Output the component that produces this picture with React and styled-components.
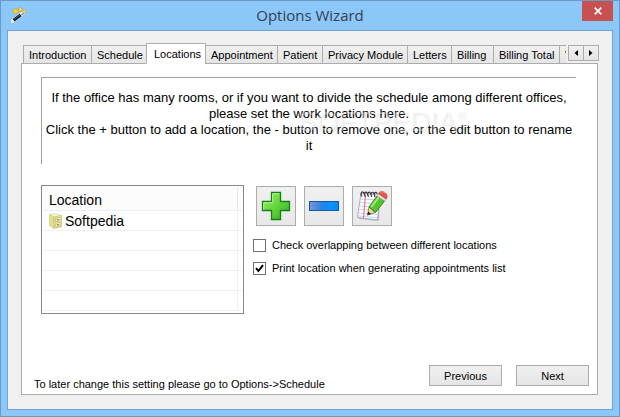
import React, { useState } from 'react'
import styled, { createGlobalStyle } from 'styled-components'

const GlobalStyle = createGlobalStyle`
    * {
        box-sizing: border-box;
    }
    body {
        margin: 0;
        font-family: 'Liberation Sans', Arial, sans-serif;
        font-size: 11px;
        color: #000;
    }
    button {
        font: inherit;
        color: inherit;
    }
`

const Window = styled.div`
    display: flex;
    flex-direction: column;
    min-height: 100vh;
    padding: 0 6px 6px;
    border: 1px solid #6b98c4;
    background: #8cc7fa;
`

const TitleBar = styled.header`
    display: grid;
    grid-template-columns: 45px 1fr 45px;
    align-items: start;
    height: 29px;
`

const AppIcon = styled.svg`
    width: 16px;
    height: 16px;
    margin: 6px 0 0 4px;
`

const Title = styled.h1`
    margin: 0;
    text-align: center;
    font-family: 'Open Sans', 'Segoe UI', sans-serif;
    font-size: 15px;
    line-height: 29px;
    font-weight: 400;
    color: #33414e;
`

const CloseBtn = styled.button`
    display: flex;
    align-items: center;
    justify-content: center;
    justify-self: end;
    width: 31px;
    height: 20px;
    padding: 0;
    border: none;
    background: #c75050;
`

const Client = styled.main`
    display: flex;
    flex: 1;
    flex-direction: column;
    padding: 12px 14px 14px 13px;
    border: 1px solid #73a3d0;
    background: #f0f0f0;
`

const TabBar = styled.div`
    display: flex;
    margin-bottom: -1px;
    padding-left: 2px;
    z-index: 1;
`

const TabList = styled.div`
    display: flex;
    flex: 1;
    align-items: flex-end;
    min-width: 0;
    height: 21px;
    overflow: hidden;
`

const Tab = styled.button`
    flex: none;
    width: ${props => props.$width}px;
    height: ${props => (props.$active ? 21 : 19)}px;
    margin-right: -1px;
    padding: 0 0 0 ${props => (props.$active ? 7 : 5)}px;
    border: 1px solid #acacac;
    border-bottom-color: ${props => (props.$active ? '#fff' : '#acacac')};
    background: ${props => (props.$active ? '#fff' : 'linear-gradient(#f0f0f0, #e5e5e5)')};
    text-align: left;
    white-space: nowrap;
`

const TabScroll = styled.div`
    display: flex;
    padding: 2px 0 3px 2px;
`

const ScrollBtn = styled.button`
    display: flex;
    align-items: center;
    justify-content: center;
    width: 16px;
    height: 16px;
    margin-right: -1px;
    padding: 0;
    border: 1px solid #acacac;
    background: linear-gradient(#f0f0f0, #e5e5e5);
`

const Page = styled.section`
    display: flex;
    flex: 1;
    flex-direction: column;
    padding: 13px 8px 8px 12px;
    border: 1px solid #acacac;
    background: #fff;
`

const Message = styled.div`
    position: relative;
    min-height: 87px;
    margin: 0 13px 0 7px;
    padding: 12px 3px 8px;
    border-top: 1px solid #a0a0a0;
    border-left: 1px solid #a0a0a0;
    font-size: 13px;
    line-height: 16px;
    text-align: center;
`

const MessageText = styled.p`
    margin: 0;
`

const Watermark = styled.span`
    position: absolute;
    top: 28px;
    left: 256px;
    font-size: 28px;
    line-height: 32px;
    color: rgba(255, 255, 255, 0.4);
    text-shadow: 1px 1px 2px rgba(0, 0, 0, 0.1);
    pointer-events: none;

    sup {
        font-size: 12px;
        line-height: 0;
    }
`

const Content = styled.div`
    display: flex;
    gap: 9px;
    margin: 21px 0 0 7px;
`

const ListBox = styled.div`
    flex: none;
    width: 203px;
    height: 129px;
    padding: 1px;
    border: 1px solid #828790;
    overflow: hidden;
`

const LocationTable = styled.table`
    width: 100%;
    border-collapse: separate;
    border-spacing: 0;
    table-layout: fixed;
    font-size: 14px;
`

const HeadCell = styled.th`
    width: ${props => (props.$filler ? '4px' : 'auto')};
    height: 24px;
    padding: ${props => (props.$filler ? '0' : '2px 6px 0')};
    border-right: ${props => (props.$filler ? 'none' : '1px solid #e3ebf5')};
    border-bottom: 1px solid #e8eef7;
    background: #fcfcfc;
    font-weight: 400;
    text-align: left;
`

const Cell = styled.td`
    height: 20px;
    padding: ${props => (props.$filler ? '0' : '0 6px')};
    border-right: ${props => (props.$filler ? 'none' : '1px solid #f0f0f0')};
    border-bottom: 1px solid #f0f0f0;
`

const LocationItem = styled.div`
    display: flex;
    align-items: center;
    gap: 3px;
    line-height: 16px;
`

const Settings = styled.div`
    display: flex;
    flex-direction: column;
    align-items: flex-start;
`

const Tools = styled.div`
    display: flex;
    gap: 8px;
    margin: 1px 0 12px 3px;
`

const ToolBtn = styled.button`
    display: flex;
    align-items: center;
    justify-content: center;
    width: 40px;
    height: 40px;
    padding: 0;
    border: 1px solid #acacac;
    background: linear-gradient(#f0f0f0, #e8e8e8);
`

const CheckRow = styled.label`
    display: flex;
    align-items: center;
    gap: 6px;
    height: 14px;
    margin-bottom: 9px;
`

const Checkbox = styled.input`
    appearance: none;
    flex: none;
    width: 13px;
    height: 13px;
    margin: 0;
    border: 1px solid #707070;
    background: #fff;

    &:checked {
        background: #fff url("data:image/svg+xml,%3Csvg xmlns='http://www.w3.org/2000/svg' viewBox='0 0 11 11'%3E%3Cpath d='M2 5.2 4.4 8 9 2.2' fill='none' stroke='%23000' stroke-width='2'/%3E%3C/svg%3E");
    }
`

const Footer = styled.footer`
    display: flex;
    align-items: flex-end;
    gap: 14px;
    margin-top: auto;
`

const Hint = styled.span`
    flex: 1;
    line-height: 14px;
    margin-bottom: -5px;
`

const NavBtn = styled.button`
    width: 73px;
    height: 21px;
    padding: 0;
    border: 1px solid #acacac;
    background: linear-gradient(#f0f0f0, #e5e5e5);
`

const tabs = [
    { label: 'Introduction', width: 69 },
    { label: 'Schedule', width: 56 },
    { label: 'Locations', width: 60 },
    { label: 'Appointment', width: 73 },
    { label: 'Patient', width: 46 },
    { label: 'Privacy Module', width: 86 },
    { label: 'Letters', width: 45 },
    { label: 'Billing', width: 43 },
    { label: 'Billing Total', width: 67 },
    { label: 'V', width: 40 },
]

const WandIcon = () => (
    <AppIcon viewBox='0 0 16 16' aria-hidden='true'>
        <path d='M1.2 14.2 12 6.2' stroke='#e8eef4' strokeWidth='3.6' strokeLinecap='round' />
        <path d='M2.6 13.2 9.6 8' stroke='#15191c' strokeWidth='3' />
        <path d='M3 12.4 9 8' stroke='#5d6a70' strokeWidth='0.8' />
        <path d='M10.2 8.2 13.2 6' stroke='#8b9296' strokeWidth='1.4' />
        <path d='m3.6 1.6 1.6.9 1.8-.6-.2 2 .8 1.7-1.9.3-1.5 1.3-.9-1.7-2-.8L2.9 3.5Z' fill='#ffd82e' stroke='#d99f13' strokeWidth='0.7' />
        <circle cx='9.2' cy='2.4' r='1.7' fill='#ffe04a' stroke='#d9a21b' strokeWidth='0.7' />
        <circle cx='13.2' cy='4.4' r='1.5' fill='#ffe04a' stroke='#d9a21b' strokeWidth='0.7' />
    </AppIcon>
)

const CabinetIcon = () => (
    <svg width='13' height='16' viewBox='0 0 13 16' aria-hidden='true'>
        <path d='M.5 1.5 5.500.5l7 2-7.500 1.500Z' fill='#f8f7cc' stroke='#d5d28a' strokeWidth='0.6' />
        <path d='M.5 1.500 5 4v11.500L.5 12.500Z' fill='#e2df8c' stroke='#cdca74' strokeWidth='0.6' />
        <path d='M5 4 12.500 2.500v11.500l-7.500 1.500Z' fill='#f0eeae' stroke='#bdb95c' strokeWidth='0.6' />
        <path d='m6.400 5.300 4.800-.9v3.500l-4.800.9zM6.400 10.300l4.800-.9v3.500l-4.800.9z' fill='#fbfadf' stroke='#aeaa50' strokeWidth='0.7' />
        <path d='M7.800 6.800h2M7.800 11.800h2' stroke='#5c5b38' strokeWidth='1.100' />
    </svg>
)

const PlusIcon = () => (
    <svg width='30' height='30' viewBox='0 0 30 30' aria-hidden='true'>
        <defs>
            <linearGradient id='plus' x1='0' y1='0' x2='1' y2='1'>
                <stop offset='0' stopColor='#a4ef6c' />
                <stop offset='0.5' stopColor='#62d63c' />
                <stop offset='1' stopColor='#35a81c' />
            </linearGradient>
        </defs>
        <path d='M10.500 1.500h9v9h9v9h-9v9h-9v-9h-9v-9h9Z' fill='url(#plus)' stroke='#148018' strokeWidth='1.300' />
        <path d='M11.700 10.500V2.700h6.600M2.700 18.500v-6.800h9' fill='none' stroke='#c2f79c' strokeWidth='0.900' />
    </svg>
)

const MinusIcon = () => (
    <svg width='30' height='30' viewBox='0 0 30 30' aria-hidden='true'>
        <defs>
            <linearGradient id='minus' x1='0' y1='0' x2='1' y2='0'>
                <stop offset='0' stopColor='#7d97d0' />
                <stop offset='0.450' stopColor='#2482e4' />
                <stop offset='0.750' stopColor='#0595fc' />
                <stop offset='1' stopColor='#0a86ee' />
            </linearGradient>
        </defs>
        <rect x='0.500' y='10.500' width='29' height='9' fill='url(#minus)' stroke='#1557ae' />
    </svg>
)

const EditIcon = () => (
    <svg width='32' height='34' viewBox='0 0 32 34' aria-hidden='true'>
        <path d='M5 5 24 6l-1 25-1 1L3 30Z' fill='#b9bec8' />
        <path d='M5 4.500 24 5.500l-2.500 25.500L1.500 28.500Z' fill='#fdfdff' stroke='#8e96a3' strokeWidth='0.700' />
        <path d='m4.300 10 19 1M4 13.500l19 1.200M3.600 17l19 1.300M3.200 20.500l19 1.400M2.800 24l19 1.500M2.300 27l19 1.700' stroke='#a9c8f5' strokeWidth='0.800' />
        <path d='M9.500 5.500 7.500 29' stroke='#f4715e' strokeWidth='1.100' />
        <path d='M6 7.500c-2.500-3.500 1-6.500 2-3M9.300 7.600c-2.500-3.500 1-6.500 2-3M12.600 7.700c-2.500-3.500 1-6.500 2-3M15.900 7.800c-2.500-3.500 1-6.500 2-3M19.200 7.900c-2.500-3.500 1-6.500 2-3' fill='none' stroke='#33363b' strokeWidth='1.200' />
        <path d='m13 18-1.500 8 8-2.500Z' fill='#f6d7a0' stroke='#5b6328' strokeWidth='0.700' />
        <path d='m12.200 22.500-.9 3.800 3.800-1.300Z' fill='#202020' />
        <path d='M13 18 21 7l7.500 5-9 11.500Z' fill='#56c42c' stroke='#2a7c17' strokeWidth='0.900' />
        <path d='m15.300 18 7.700-10' stroke='#a9ec75' strokeWidth='2' />
        <path d='m21 7 1.700-2.300 7.500 5.200-1.700 2.100Z' fill='#dfe3e5' stroke='#9ba1a5' strokeWidth='0.600' />
        <path d='M22.700 4.700c1.800-5.700 11 .3 7.500 5.200Z' fill='#ec5a46' stroke='#b23227' strokeWidth='0.700' />
        <path d='M24.500 3.600c1-1.700 3.500-1 4.300.4' fill='none' stroke='#fa9b8b' strokeWidth='1' />
    </svg>
)

const App = () => {
    const [activeTab, setActiveTab] = useState('Locations')
    const [overlap, setOverlap] = useState(false)
    const [print, setPrint] = useState(true)

    return (
        <Window>
            <GlobalStyle />
            <TitleBar>
                <WandIcon />
                <Title>Options Wizard</Title>
                <CloseBtn type='button' aria-label='Close'>
                    <svg width='8' height='8' viewBox='0 0 8 8' aria-hidden='true'>
                        <path d='m.7.700 6.600 6.600M7.300.700.700 7.300' stroke='#fff' strokeWidth='1.700' />
                    </svg>
                </CloseBtn>
            </TitleBar>

            <Client>
                <TabBar>
                    <TabList role='tablist'>
                        {tabs.map(tab => (
                            <Tab
                                key={tab.label}
                                type='button'
                                role='tab'
                                aria-selected={tab.label === activeTab}
                                $active={tab.label === activeTab}
                                $width={tab.width}
                                onClick={() => setActiveTab(tab.label)}
                            >
                                {tab.label}
                            </Tab>
                        ))}
                    </TabList>
                    <TabScroll>
                        <ScrollBtn type='button' aria-label='Scroll tabs left'>
                            <svg width='4' height='6' viewBox='0 0 4 6'><path d='M4 0v6L.5 3Z' /></svg>
                        </ScrollBtn>
                        <ScrollBtn type='button' aria-label='Scroll tabs right'>
                            <svg width='4' height='6' viewBox='0 0 4 6'><path d='M0 0v6l3.500-3Z' /></svg>
                        </ScrollBtn>
                    </TabScroll>
                </TabBar>

                <Page role='tabpanel'>
                    <Message>
                        <MessageText>
                            If the office has many rooms, or if you want to divide the schedule among different offices, please set the work locations here.
                        </MessageText>
                        <MessageText>
                            Click the + button to add a location, the - button to remove one, or the edit button to rename it
                        </MessageText>
                        <Watermark aria-hidden='true'>SOFTPEDIA<sup>®</sup></Watermark>
                    </Message>

                    <Content>
                        <ListBox>
                            <LocationTable>
                                <thead>
                                    <tr>
                                        <HeadCell>Location</HeadCell>
                                        <HeadCell $filler />
                                    </tr>
                                </thead>
                                <tbody>
                                    <tr>
                                        <Cell>
                                            <LocationItem><CabinetIcon />Softpedia</LocationItem>
                                        </Cell>
                                        <Cell $filler />
                                    </tr>
                                    {[1, 2, 3, 4].map(n => (
                                        <tr key={n}>
                                            <Cell />
                                            <Cell $filler />
                                        </tr>
                                    ))}
                                </tbody>
                            </LocationTable>
                        </ListBox>

                        <Settings>
                            <Tools>
                                <ToolBtn type='button' aria-label='Add location'><PlusIcon /></ToolBtn>
                                <ToolBtn type='button' aria-label='Remove location'><MinusIcon /></ToolBtn>
                                <ToolBtn type='button' aria-label='Edit location'><EditIcon /></ToolBtn>
                            </Tools>
                            <CheckRow>
                                <Checkbox type='checkbox' checked={overlap} onChange={e => setOverlap(e.target.checked)} />
                                Check overlapping between different locations
                            </CheckRow>
                            <CheckRow>
                                <Checkbox type='checkbox' checked={print} onChange={e => setPrint(e.target.checked)} />
                                Print location when generating appointments list
                            </CheckRow>
                        </Settings>
                    </Content>

                    <Footer>
                        <Hint>To later change this setting please go to Options-&gt;Schedule</Hint>
                        <NavBtn type='button'>Previous</NavBtn>
                        <NavBtn type='button'>Next</NavBtn>
                    </Footer>
                </Page>
            </Client>
        </Window>
    )
}

export default App
